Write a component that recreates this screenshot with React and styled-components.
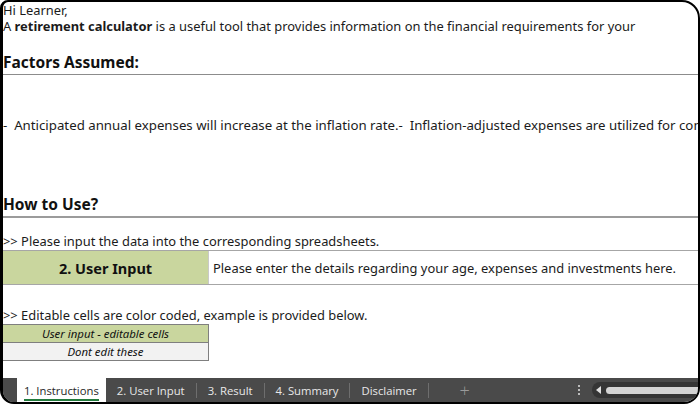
import React from 'react';
import styled, { createGlobalStyle } from 'styled-components';

const GlobalStyle = createGlobalStyle`
  html, body {
    margin: 0;
    padding: 0;
    background: #ffffff;
    overflow: hidden;
  }
`;

const Frame = styled.div`
  box-sizing: border-box;
  width: 700px;
  height: 404px;
  border: 2px solid #000;
  border-left-width: 3px;
  border-radius: 8px 18px 16px 14px;
  overflow: hidden;
  display: flex;
  flex-direction: column;
  background: #fff;
  font-family: "Noto Sans", "Open Sans", sans-serif;
  color: #1b1b1b;
`;

const Sheet = styled.div`
  flex: 1;
  display: flex;
  flex-direction: column;
  overflow: hidden;
`;

const Line = styled.div`
  height: ${p => p.h}px;
  line-height: 15px;
  display: flex;
  align-items: ${p => p.align || 'center'};
  padding-bottom: ${p => p.lift || 0}px;
  font-size: ${p => p.size || 12.9}px;
  white-space: pre;
  overflow: hidden;
  border-bottom: ${p => p.rule ? `${p.rule}px solid ${p.ruleColor || '#a6a6a6'}` : 'none'};
`;

const Heading = styled.span`
  font-size: 15.5px;
  line-height: 18px;
  font-weight: 700;
  color: #111;
`;

const Spacer = styled.div`
  height: ${p => p.h}px;
`;

const TableRow = styled.div`
  height: 33px;
  display: flex;
  border-bottom: 1px solid #a6a6a6;
  font-size: 12.9px;
`;

const SheetLink = styled.div`
  width: 205px;
  background: #c9d69e;
  display: flex;
  align-items: center;
  justify-content: center;
  font-weight: 700;
  font-size: 14.5px;
  color: #111;
  border-right: 1px solid #c9c9c9;
`;

const Note = styled.div`
  flex: 1;
  display: flex;
  align-items: center;
  padding-left: 4px;
  white-space: nowrap;
`;

const Legend = styled.div`
  width: 205px;
  display: flex;
  flex-direction: column;
  border: 1px solid #7f7f7f;
  border-left: none;
`;

const LegendCell = styled.div`
  height: 17px;
  display: flex;
  align-items: center;
  justify-content: center;
  font-size: 11.4px;
  font-style: italic;
  background: ${p => p.editable ? '#c9d69e' : '#f2f2f2'};
  border-top: ${p => p.editable ? 'none' : '1px solid #7f7f7f'};
  color: #111;
`;

const TabBar = styled.div`
  height: 24px;
  flex-shrink: 0;
  background: #4a4a4a;
  display: flex;
  align-items: stretch;
  font-family: "Open Sans", "Noto Sans", sans-serif;
  font-size: 11.3px;
  color: #e8e8e8;
`;

const TabLead = styled.div`
  width: 14px;
  background: #4a4a4a;
`;

const Tab = styled.div`
  display: flex;
  align-items: center;
  padding: 0 ${p => p.pad || 11}px;
  background: ${p => p.active ? '#ffffff' : 'transparent'};
  color: ${p => p.active ? '#1f1f1f' : '#e8e8e8'};
  white-space: nowrap;
`;

const TabLabel = styled.span`
  padding-bottom: 1px;
  border-bottom: 2px solid ${p => p.active ? '#217a3c' : 'transparent'};
  margin-top: 4px;
`;

const TabSep = styled.div`
  width: 1px;
  margin: 5px 0 4px;
  background: #6e6e6e;
`;

const AddTab = styled.div`
  width: 72px;
  display: flex;
  align-items: center;
  justify-content: center;
  color: #9a9a9a;
  font-size: 18px;
  font-weight: 300;
`;

const Grow = styled.div`
  flex: 1;
`;

const Dots = styled.div`
  width: 14px;
  margin-right: 6px;
  display: flex;
  align-items: center;
  justify-content: center;
`;

const Scroller = styled.div`
  width: 102px;
  margin: 4px 0;
  background: #353535;
  border-radius: 8px 0 0 8px;
  display: flex;
  align-items: center;
  padding-left: 4px;
  gap: 4px;
`;

const Thumb = styled.div`
  flex: 1;
  height: 7px;
  background: #d4d4d4;
  border-radius: 4px 0 0 4px;
`;

const tabs = ['1. Instructions', '2. User Input', '3. Result', '4. Summary', 'Disclaimer'];

export default function App() {
  return (
    <>
      <GlobalStyle />
      <Frame>
        <Sheet>
          <Line h={16}>Hi Learner,</Line>
          <Line h={16}>A <b>retirement calculator</b> is a useful tool that provides information on the financial requirements for your</Line>
          <Spacer h={15} />
          <Line h={25} rule={1} ruleColor="#8c8c8c"><Heading>Factors Assumed:</Heading></Line>
          <Spacer h={35} />
          <Line h={30} size={13.25}>{'-  Anticipated annual expenses will increase at the inflation rate.-  Inflation-adjusted expenses are utilized for computing the corpus required'}</Line>
          <Spacer h={49} />
          <Line h={24} rule={2} ruleColor="#9b9b9b" align="flex-end" lift={3}><Heading>How to Use?</Heading></Line>
          <Line h={31} rule={1} align="flex-end" lift={1}>{'>> Please input the data into the corresponding spreadsheets.'}</Line>
          <TableRow>
            <SheetLink>2. User Input</SheetLink>
            <Note>Please enter the details regarding your age, expenses and investments here.</Note>
          </TableRow>
          <Spacer h={22} />
          <Line h={17}>{'>> Editable cells are color coded, example is provided below.'}</Line>
          <Legend>
            <LegendCell editable>User input - editable cells</LegendCell>
            <LegendCell>Dont edit these</LegendCell>
          </Legend>
        </Sheet>
        <TabBar>
          <TabLead />
          {tabs.map((t, i) => (
            <React.Fragment key={t}>
              <Tab active={i === 0} pad={i === 0 ? 7 : 11}>
                <TabLabel active={i === 0}>{t}</TabLabel>
              </Tab>
              {i > 0 && <TabSep />}
            </React.Fragment>
          ))}
          <AddTab>+</AddTab>
          <Grow />
          <Dots>
            <svg width="4" height="12" viewBox="0 0 4 12">
              <circle cx="2" cy="2" r="1.1" fill="#d8d8d8" />
              <circle cx="2" cy="6" r="1.1" fill="#d8d8d8" />
              <circle cx="2" cy="10" r="1.1" fill="#d8d8d8" />
            </svg>
          </Dots>
          <Scroller>
            <svg width="6" height="8" viewBox="0 0 6 8">
              <path d="M5 0 L0 4 L5 8 Z" fill="#e0e0e0" />
            </svg>
            <Thumb />
          </Scroller>
        </TabBar>
      </Frame>
    </>
  );
}
